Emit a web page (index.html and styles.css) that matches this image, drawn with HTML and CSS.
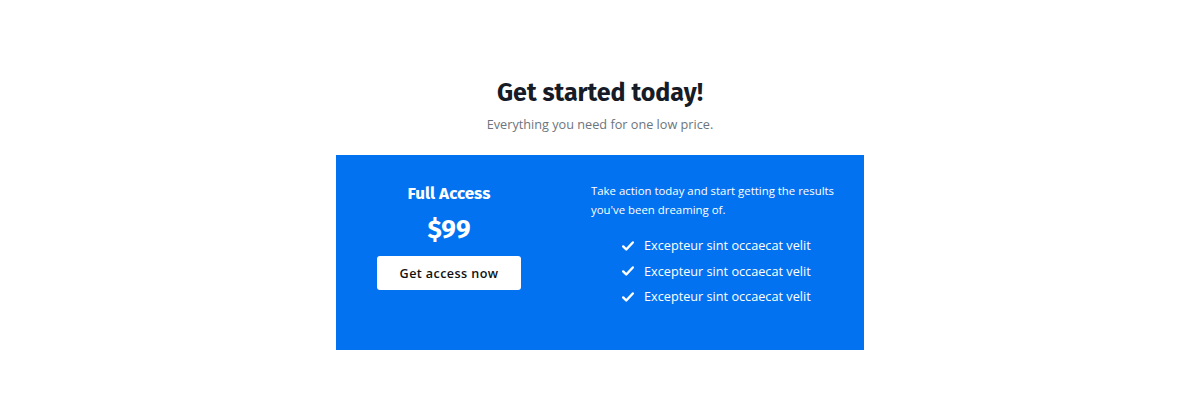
FILE: index.html
```html
<!DOCTYPE html>
<html lang="en">
<head>
<meta charset="utf-8">
<title>Pricing</title>
<link rel="stylesheet" href="styles.css">
</head>
<body>
<section class="pricing">
  <header class="intro">
    <h1 class="title">Get started today!</h1>
    <p class="subtitle">Everything you need for one low price.</p>
  </header>
  <div class="card">
    <div class="plan">
      <h2 class="plan-name">Full Access</h2>
      <div class="plan-price">$99</div>
      <a class="btn" href="#">Get access now</a>
    </div>
    <div class="details">
      <p class="lead">Take action today and start getting the results you've been dreaming of.</p>
      <ul class="features">
        <li><svg class="check" viewBox="0 0 16 16" aria-hidden="true"><path d="M2.5 8.5l3.5 3.5 7.5-8" fill="none" stroke="currentColor" stroke-width="2.8" stroke-linecap="round" stroke-linejoin="round"/></svg>Excepteur sint occaecat velit</li>
        <li><svg class="check" viewBox="0 0 16 16" aria-hidden="true"><path d="M2.5 8.5l3.5 3.5 7.5-8" fill="none" stroke="currentColor" stroke-width="2.8" stroke-linecap="round" stroke-linejoin="round"/></svg>Excepteur sint occaecat velit</li>
        <li><svg class="check" viewBox="0 0 16 16" aria-hidden="true"><path d="M2.5 8.5l3.5 3.5 7.5-8" fill="none" stroke="currentColor" stroke-width="2.8" stroke-linecap="round" stroke-linejoin="round"/></svg>Excepteur sint occaecat velit</li>
      </ul>
    </div>
  </div>
</section>
</body>
</html>
```
FILE: styles.css
```css
* { box-sizing: border-box; }
html, body { margin: 0; padding: 0; background: #fff; }
body { font-family: "Open Sans", "Noto Sans", sans-serif; color: #212529; }

.pricing {
  display: flex;
  flex-direction: column;
  align-items: center;
  padding-top: 77px;
}

.intro { text-align: center; }
.title {
  margin: 0;
  font-family: "Fira Sans", "Lato", "Open Sans", sans-serif;
  font-weight: 700;
  font-size: 25px;
  line-height: 32px;
  color: #161b26;
}
.subtitle {
  margin: 5px 0 0;
  font-size: 12.7px;
  line-height: 20px;
  color: #6c757d;
}

.card {
  margin-top: 21px;
  width: 528px;
  height: 195px;
  background: #0272f1;
  color: #fff;
  display: grid;
  grid-template-columns: 146px 252px;
  column-gap: 69px;
  padding: 26px 21px 0 40px;
}

.plan {
  display: flex;
  flex-direction: column;
  align-items: center;
  padding-top: 1px;
}
.plan-name {
  margin: 0;
  font-family: "Fira Sans", "Lato", sans-serif;
  font-weight: 700;
  font-size: 17px;
  line-height: 24px;
}
.plan-price {
  margin-top: 8px;
  font-family: "Fira Sans", "Lato", sans-serif;
  font-weight: 700;
  font-size: 26px;
  line-height: 32px;
}
.btn {
  margin-top: 10px;
  width: 144px;
  height: 34px;
  display: flex;
  align-items: center;
  justify-content: center;
  background: #fff;
  color: #111;
  border-radius: 3px;
  text-decoration: none;
  font-size: 12.6px;
  font-weight: 600;
  letter-spacing: 0.4px;
}

.lead {
  margin: 0;
  font-size: 11.4px;
  line-height: 19px;
}
.features {
  list-style: none;
  margin: 14px 0 0;
  padding: 0 0 0 30px;
}
.features li {
  display: flex;
  align-items: center;
  font-size: 12.7px;
  line-height: 25.5px;
}
.check {
  width: 14px;
  height: 14px;
  margin-right: 9px;
  color: #fff;
}
```
